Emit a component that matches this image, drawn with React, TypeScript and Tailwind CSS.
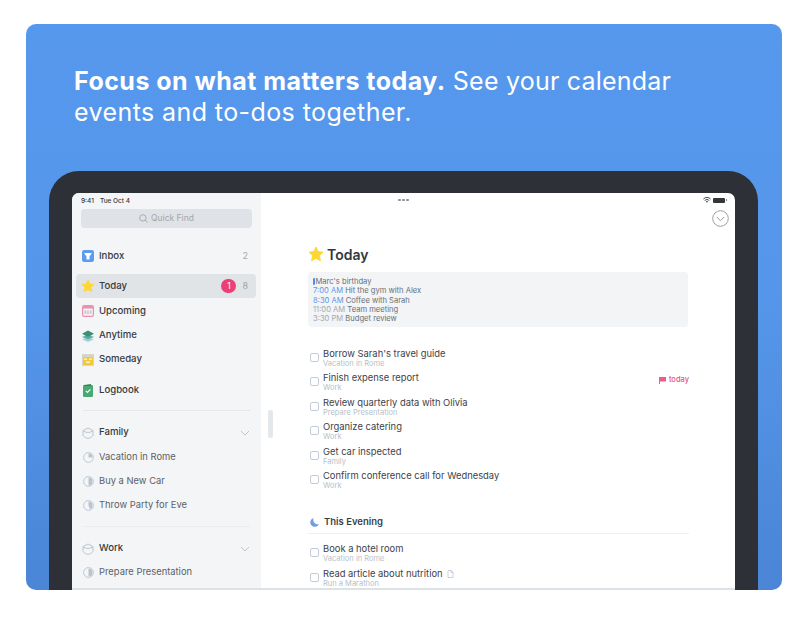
import React from "react";

const Star = ({ s = 16 }: { s?: number }) => (
  <svg width={s} height={s} viewBox="0 0 24 24" className="shrink-0">
    <path d="M12 1.5l3.2 6.9 7.3.9-5.4 5.1 1.5 7.6L12 18.4l-6.6 3.6 1.5-7.6L1.5 9.3l7.3-.9z" fill="#fdd835" stroke="#fdd835" strokeWidth="1.5" strokeLinejoin="round" />
  </svg>
);

const Inbox = () => (
  <svg width="12" height="12" viewBox="0 0 12 12" className="shrink-0">
    <rect width="12" height="12" rx="2.2" fill="#5b9bf0" />
    <path d="M2 3h8L7.5 6.4V9.6h-3V6.4z" fill="#fff" />
  </svg>
);

const Upcoming = () => (
  <svg width="12" height="12" viewBox="0 0 12 12" className="shrink-0">
    <rect width="12" height="12" rx="2.2" fill="#ee8fae" />
    <rect x="1.2" y="3.6" width="9.6" height="7.2" rx="0.8" fill="#f1f1f4" />
    <path d="M2.6 5.4h1.6v3.6H2.6zM5.2 5.4h1.6v3.6H5.2zM7.8 5.4h1.6v3.6H7.8z" fill="#c8c9d2" />
  </svg>
);

const Anytime = () => (
  <svg width="12" height="12" viewBox="0 0 12 12" className="shrink-0">
    <path d="M6 7.2l6 2.3L6 12 0 9.5z" fill="#a7d3d6" />
    <path d="M6 4.6l6 2.4-6 2.5L0 7z" fill="#5fb0a6" />
    <path d="M6 0.6l6 3.2-6 3.2-6-3.2z" fill="#3c8f78" />
  </svg>
);

const Someday = () => (
  <svg width="12" height="12" viewBox="0 0 12 12" className="shrink-0">
    <rect width="12" height="12" rx="1" fill="#d9d5c5" />
    <rect x="1" y="3" width="10" height="8" fill="#f3c93c" />
    <path d="M2 4.5h3v1.5H2zM7 4.5h3v1.5H7zM4 7.5h4V9H4z" fill="#f6f0da" />
  </svg>
);

const Logbook = () => (
  <svg width="10" height="13" viewBox="0 0 10 13" className="ml-[1px] shrink-0">
    <rect y="1" width="10" height="12" rx="1.2" fill="#4aa872" />
    <path d="M1 1l7-1v2H1z" fill="#2f8a58" />
    <path d="M2.8 6.8l1.6 1.7 3-3.2" fill="none" stroke="#fff" strokeWidth="1.1" />
  </svg>
);

const AreaIcon = () => (
  <svg width="12" height="12" viewBox="0 0 12 12" className="shrink-0" fill="none" stroke="#b4bfca" strokeWidth="0.9">
    <path d="M1 3.6L6 1l5 2.6v4.8C10 10 8 11.3 6 11.3S2 10 1 8.4z" strokeLinejoin="round" />
    <path d="M1 3.6C3 6 9 6 11 3.6" />
  </svg>
);

const Pie = ({ d }: { d: string }) => (
  <svg width="11" height="11" viewBox="0 0 11 11" className="ml-[0.5px] shrink-0">
    <circle cx="5.5" cy="5.5" r="4.9" fill="none" stroke="#b9c4cf" strokeWidth="0.9" />
    <path d={d} fill="#b9c4cf" />
  </svg>
);

const Chevron = () => (
  <svg width="10" height="6" viewBox="0 0 10 6" className="shrink-0" fill="none" stroke="#bcc6cf" strokeWidth="1">
    <path d="M1 1l4 4 4-4" />
  </svg>
);

const Row = ({ icon, label, cls = "", bold = false, right }: { icon: React.ReactNode; label: string; cls?: string; bold?: boolean; right?: React.ReactNode }) => (
  <div className={`flex h-6 items-center pl-[6px] pr-[7px] ${cls}`}>
    <span className="flex w-[17px] shrink-0 items-center">{icon}</span>
    <span className={`flex-1 ${bold ? "text-[9.6px] font-medium text-[#363b41]" : "text-[9.4px] text-[#5c6268]"}`}>{label}</span>
    {right}
  </div>
);

const events: [string, string, string][] = [
  ["7:00 AM", "Hit the gym with Alex", "text-[#5f97e6]"],
  ["8:30 AM", "Coffee with Sarah", "text-[#5f97e6]"],
  ["11:00 AM", "Team meeting", "text-[#a4a9ae]"],
  ["3:30 PM", "Budget review", "text-[#a4a9ae]"],
];

const Task = ({ title, sub, extra, tag }: { title: string; sub: string; extra?: React.ReactNode; tag?: boolean }) => (
  <div className="flex h-[24.4px] items-start">
    <span className="mt-[5px] h-[9px] w-[9px] shrink-0 rounded-[2px] border border-[#c3ccd6]" />
    <div className="ml-[4px] flex-1">
      <div className="flex items-center text-[9.4px] leading-[12px] text-[#3d4248]">{title}{extra}</div>
      <div className="text-[7.5px] leading-[8px] text-[#b5bfca]">{sub}</div>
    </div>
    {tag && (
      <div className="mt-[4px] flex items-center gap-[3px] text-[7.5px] font-medium leading-[8px] text-[#e8528a]">
        <svg width="7" height="7" viewBox="0 0 7 7"><path d="M0 0h7v4.5H1V7H0z" fill="#ee5d90" /></svg>
        today
      </div>
    )}
  </div>
);

export default function App() {
  return (
    <div className="h-[618px] w-[806px] overflow-hidden bg-white pt-6 font-['Inter',sans-serif]">
      <div className="ml-[26px] h-[566px] w-[756px] overflow-hidden rounded-[10px] bg-gradient-to-b from-[#5698ed] via-[#5596ea] to-[#4a85d6]">
        <h1 className="pl-[48px] pt-[42px] text-[25px] leading-[31px] tracking-[0.21px] text-white">
          <span className="font-bold tracking-[0.46px]">Focus on what matters today.</span> See your calendar
          <br />
          <span className="tracking-[0.41px]">events and to-dos together.</span>
        </h1>
        <div className="ml-[23px] mt-[43px] h-[419px] w-[709px] rounded-t-[30px] bg-[#2d3036] px-[23px] pt-[22px]">
          <div className="flex h-[397px] overflow-hidden rounded-t-[7px] border-b-2 border-[#dde2e7] bg-white">
            <aside className="flex h-full w-[189px] shrink-0 flex-col bg-[#f3f5f7] px-[4px]">
              <div className="flex h-[16px] shrink-0 items-center gap-[6px] pl-[5px] pt-[2px] text-[6.5px] font-medium text-[#33373c]">
                <span>9:41</span>
                <span>Tue Oct 4</span>
              </div>
              <div className="mx-[5px] flex h-[19px] shrink-0 items-center justify-center gap-[3px] rounded-[4px] bg-[#dfe2e6] text-[8.5px] text-[#a3a8ad]">
                <svg width="9" height="9" viewBox="0 0 9 9" fill="none" stroke="#9aa0a6" strokeWidth="0.8"><circle cx="3.9" cy="3.9" r="3.2" /><path d="M6.3 6.3L8.6 8.6" /></svg>
                Quick Find
              </div>
              <Row cls="mt-[16px]" icon={<Inbox />} label="Inbox" bold right={<span className="mr-[2px] text-[9px] text-[#a2a8ae]">2</span>} />
              <div className="mt-[6px] mr-[1px] flex h-6 items-center rounded-[4px] bg-[#e1e4e7] pl-[5px] pr-[8px]">
                <span className="flex w-[18px] shrink-0 items-center"><Star s={14} /></span>
                <span className="flex-1 text-[9.6px] font-medium text-[#363b41]">Today</span>
                <span className="mr-[6px] flex h-[14px] w-[15px] items-center justify-center rounded-full bg-[#ec4074] text-[8.5px] text-white">1</span>
                <span className="text-[9px] text-[#9ea4aa]">8</span>
              </div>
              <Row cls="mt-[1px]" icon={<Upcoming />} label="Upcoming" bold />
              <Row cls="mt-[0.5px]" icon={<Anytime />} label="Anytime" bold />
              <Row icon={<Someday />} label="Someday" bold />
              <Row cls="mt-[7px]" icon={<Logbook />} label="Logbook" bold />
              <div className="mx-[7px] mt-[7px] h-px shrink-0 bg-[#e3e6ea]" />
              <Row cls="mt-[10px]" icon={<AreaIcon />} label="Family" bold right={<Chevron />} />
              <Row cls="mt-[0.5px]" icon={<Pie d="M5.5 5.5V1.5a4 4 0 0 1 4 4z" />} label="Vacation in Rome" />
              <Row cls="mt-[0.5px]" icon={<Pie d="M5.5 1.5a4 4 0 0 1 0 8z" />} label="Buy a New Car" />
              <Row icon={<Pie d="M5.5 1.5a4 4 0 0 1 1.5 7.7L5.5 5.5z" />} label="Throw Party for Eve" />
              <div className="mx-[7px] mt-[8px] h-px shrink-0 bg-[#e9ebee]" />
              <Row cls="mt-[10px]" icon={<AreaIcon />} label="Work" bold right={<Chevron />} />
              <Row icon={<Pie d="M5.5 1.5a4 4 0 0 1 0 8z" />} label="Prepare Presentation" />
            </aside>
            <div className="flex h-full w-[8px] shrink-0 items-center">
              <span className="mt-[66px] ml-[7px] h-[28px] w-[5px] shrink-0 rounded-[2px] bg-[#e4e8ea]" />
            </div>
            <main className="ml-[-8px] min-w-0 flex-1">
              <div className="flex h-[14px] items-center pl-[137px] pr-[9px]">
                <div className="flex gap-[1.5px]">
                  <span className="h-[2.5px] w-[2.5px] rounded-full bg-[#8a8d92]" />
                  <span className="h-[2.5px] w-[2.5px] rounded-full bg-[#8a8d92]" />
                  <span className="h-[2.5px] w-[2.5px] rounded-full bg-[#8a8d92]" />
                </div>
                <svg width="8" height="6" viewBox="0 0 8 6" className="ml-auto mr-[2px]" fill="none" stroke="#33373c" strokeWidth="0.9">
                  <path d="M.4 2a5.4 5.4 0 0 1 7.2 0M1.7 3.4a3.5 3.5 0 0 1 4.6 0" />
                  <path d="M2.9 4.5a1.7 1.7 0 0 1 2.2 0L4 5.8z" fill="#33373c" stroke="none" />
                </svg>
                <span className="h-[5px] w-[12px] rounded-[1px] bg-[#33373c]" />
                <span className="ml-[0.5px] h-[2px] w-[0.5px] bg-[#8a8d92]" />
              </div>
              <div className="flex justify-end pr-[6px]">
                <svg width="17" height="17" viewBox="0 0 17 17" fill="none" stroke="#9b9ea3" strokeWidth="1" className="mt-[3px]">
                  <circle cx="8.5" cy="8.5" r="7.8" />
                  <path d="M4.8 7l3.7 3.7L12.2 7" />
                </svg>
              </div>
              <div className="pl-[47px] pr-[46px]">
                <div className="mt-[17px] flex h-[20px] items-center gap-[3px]">
                  <Star s={16} />
                  <span className="text-[14px] font-semibold text-[#33383e]">Today</span>
                </div>
                <div className="mt-[8px] h-[55px] w-[380px] rounded-[4px] bg-[#f2f4f6] px-[5px] pt-[5px] text-[7.6px] leading-[9.3px] text-[#6a7076]">
                  <div className="flex items-center"><span className="mr-[1px] h-[7px] w-[1.5px] rounded-full bg-[#4f8fe8]" />Marc's birthday</div>
                  {events.map(([t, e, c]) => (
                    <div key={t}><span className={c}>{t}</span> {e}</div>
                  ))}
                </div>
                <div className="mt-[21px] pl-[2px]">
                  <Task title="Borrow Sarah's travel guide" sub="Vacation in Rome" />
                  <Task title="Finish expense report" sub="Work" tag />
                  <Task title="Review quarterly data with Olivia" sub="Prepare Presentation" />
                  <Task title="Organize catering" sub="Work" />
                  <Task title="Get car inspected" sub="Family" />
                  <Task title="Confirm conference call for Wednesday" sub="Work" />
                </div>
                <div className="mt-[17px] flex h-[23px] items-center gap-[5px] border-b border-[#edf0f2] pl-[2px] text-[9.5px] font-semibold text-[#3a3f45]">
                  <svg width="9" height="9" viewBox="0 0 9 9"><path d="M3.6 0a4.5 4.5 0 1 0 5.3 6.2A4.6 4.6 0 0 1 3.6 0z" fill="#6f9fe2" /></svg>
                  This Evening
                </div>
                <div className="mt-[9px] pl-[2px]">
                  <Task title="Book a hotel room" sub="Vacation in Rome" />
                  <Task title="Read article about nutrition" sub="Run a Marathon" extra={
                    <svg width="7" height="8" viewBox="0 0 7 8" fill="none" stroke="#b5bfca" strokeWidth="0.7" className="ml-[4px]"><path d="M1 .5h3.2L6 2.3V7.5H1zM4 .5v2h2" /></svg>
                  } />
                </div>
              </div>
            </main>
          </div>
        </div>
      </div>
    </div>
  );
}
